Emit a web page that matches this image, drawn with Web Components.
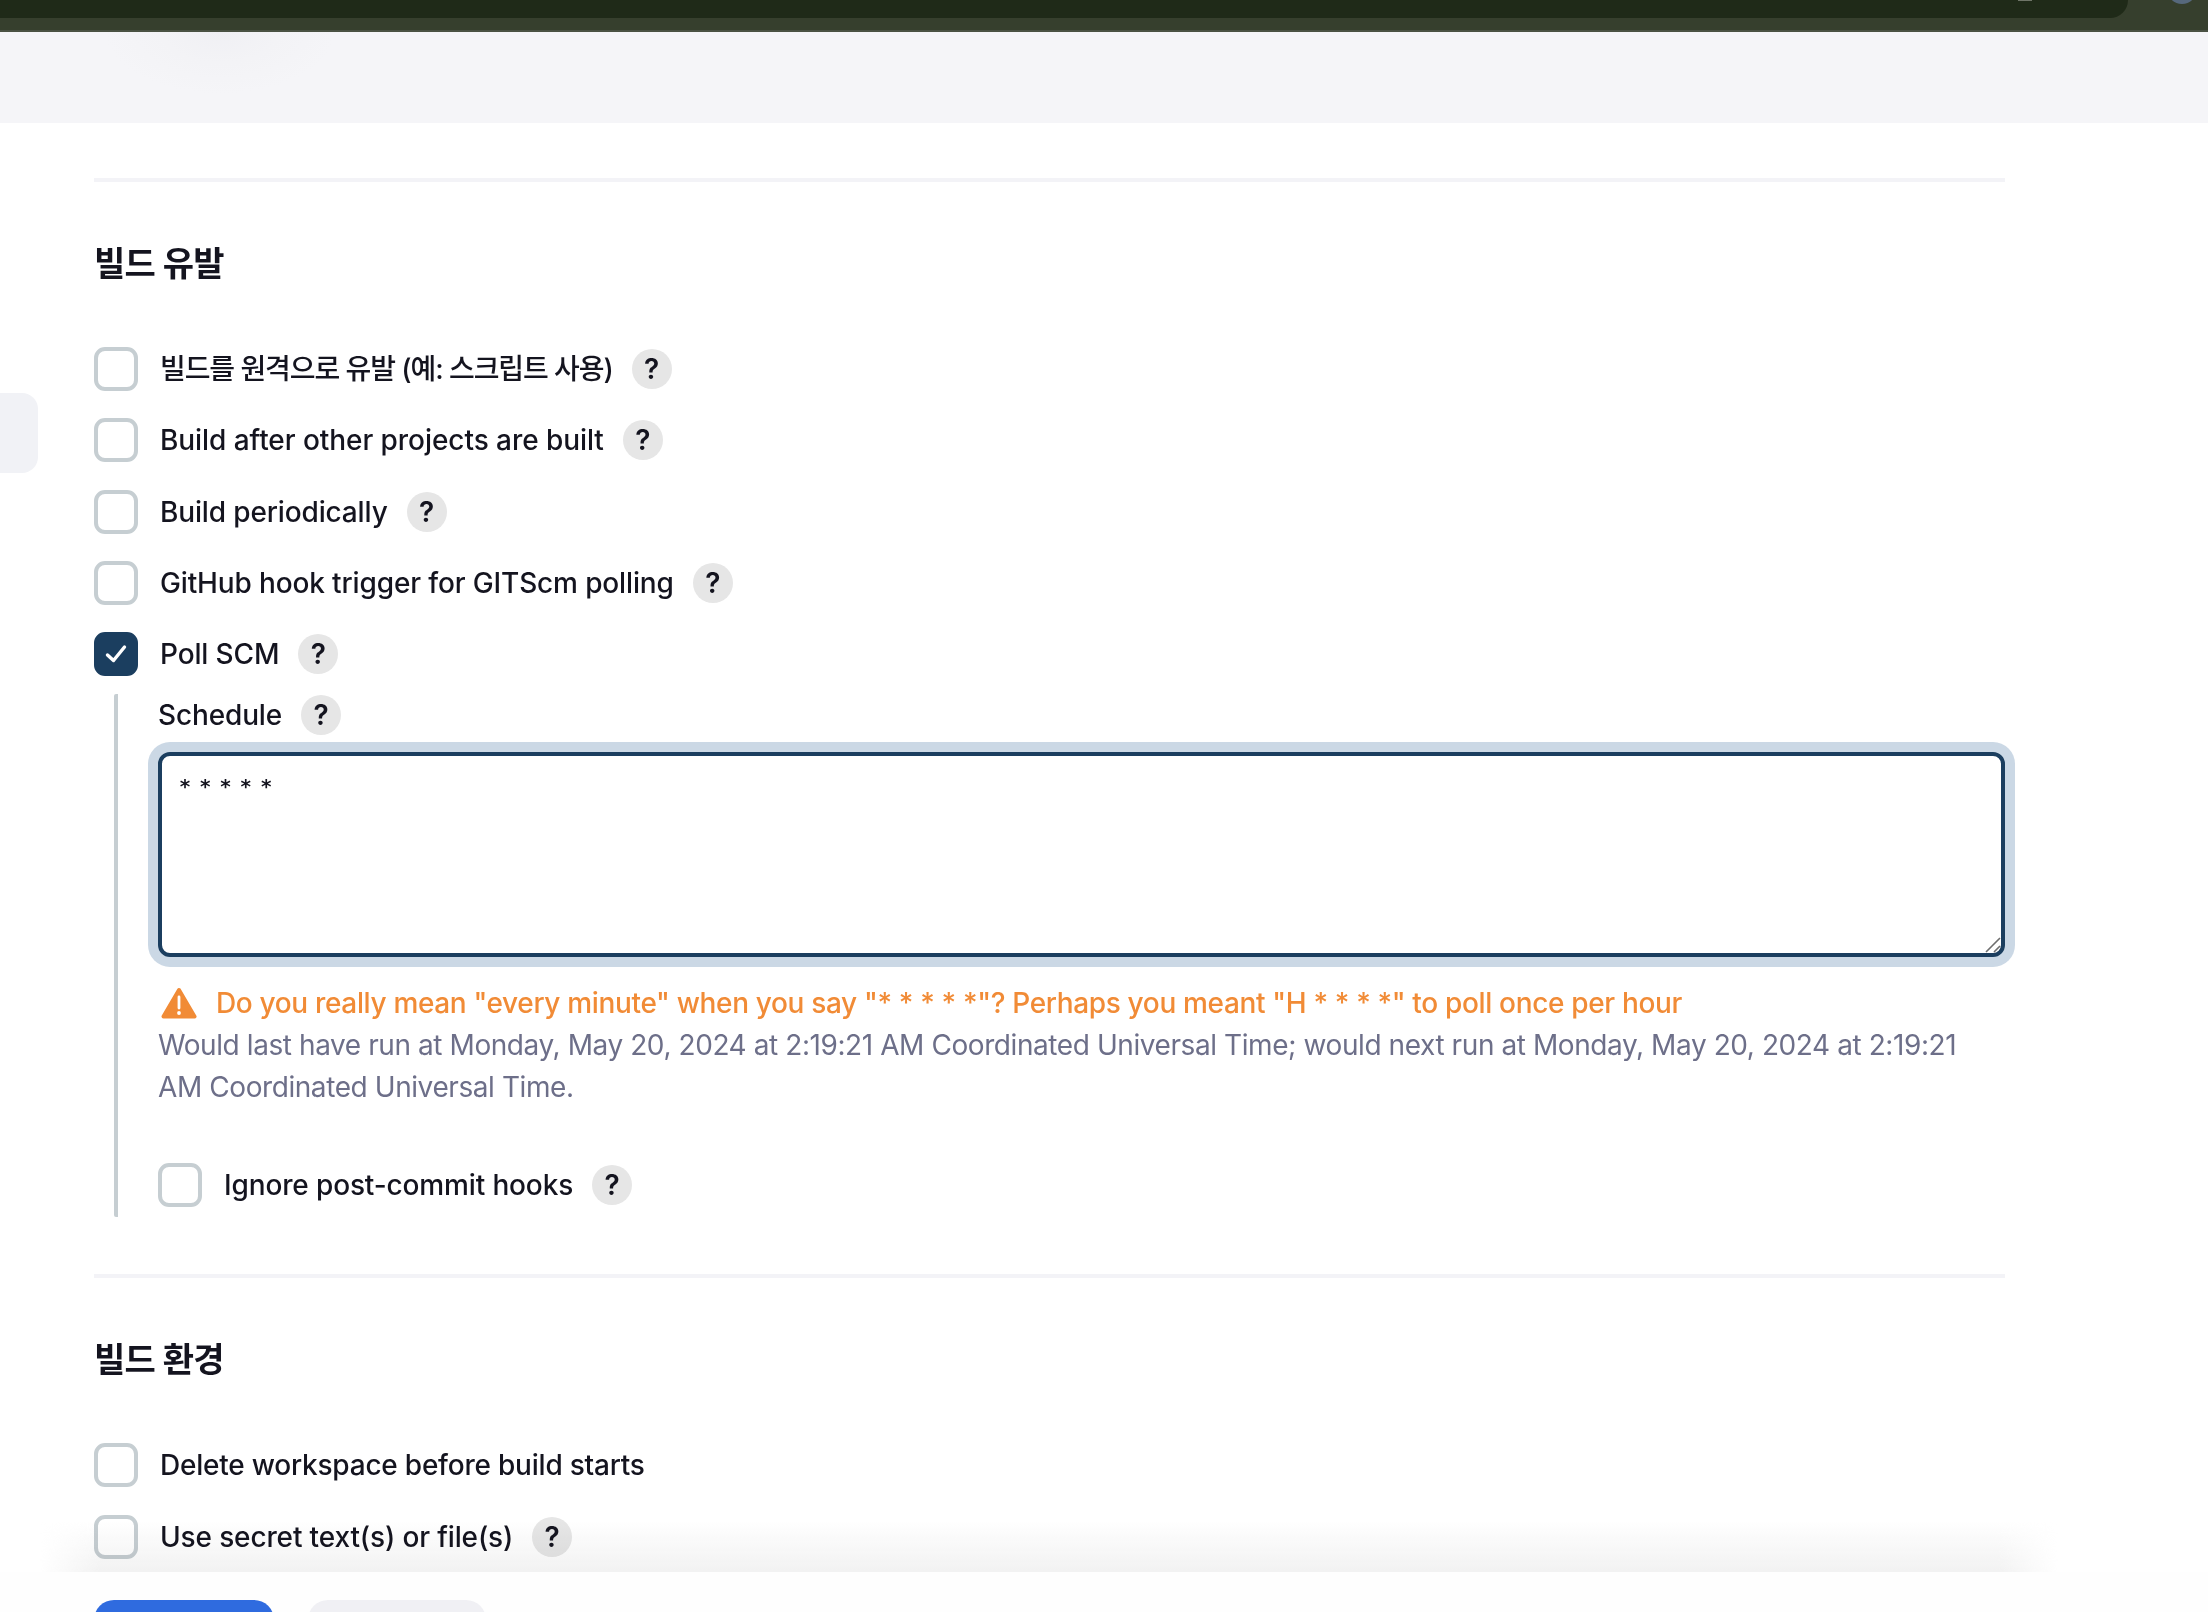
<!DOCTYPE html>
<html lang="ko">
<head>
<meta charset="utf-8">
<title>Jenkins configure</title>
<style>
  html, body { margin: 0; height: 100%; }
  body {
    width: 2208px;
    height: 1612px;
    overflow: hidden;
    background: #fff;
    color: #14141f;
    font-family: Inter, "Noto Sans CJK KR", sans-serif;
    font-size: 28px;
    line-height: 42px;
    display: flex;
    flex-direction: column;
    position: relative;
  }
  jk-page { flex: 1; min-height: 0; }
</style>
</head>
<body>
  <jk-topbar></jk-topbar>
  <jk-band></jk-band>
  <jk-sidetab></jk-sidetab>
  <jk-page>
    <jk-section title="빌드 유발">
      <jk-check help style="letter-spacing:-1.08px">빌드를 원격으로 유발 (예: 스크립트 사용)</jk-check>
      <jk-check help style="letter-spacing:-0.06px">Build after other projects are built</jk-check>
      <jk-check help>Build periodically</jk-check>
      <jk-check help>GitHub hook trigger for GITScm polling</jk-check>
      <jk-check help checked>Poll SCM</jk-check>
      <jk-nested>
        <jk-field-label>Schedule</jk-field-label>
        <jk-textarea>* * * * *</jk-textarea>
        <jk-warning>Do you really mean "every minute" when you say "* * * * *"? Perhaps you meant "H * * * *" to poll once per hour</jk-warning>
        <jk-note>Would last have run at Monday, May 20, 2024 at 2:19:21 AM Coordinated Universal Time; would next run at Monday, May 20, 2024 at 2:19:21 AM Coordinated Universal Time.</jk-note>
        <jk-check help class="ignore">Ignore post-commit hooks</jk-check>
      </jk-nested>
    </jk-section>
    <jk-section title="빌드 환경" class="env">
      <jk-check style="letter-spacing:-0.22px">Delete workspace before build starts</jk-check>
      <jk-check help>Use secret text(s) or file(s)</jk-check>
    </jk-section>
  </jk-page>
  <jk-bottombar></jk-bottombar>

<script>
function shadow(el, html) {
  el.attachShadow({ mode: 'open' });
  el.shadowRoot.innerHTML = html;
}

class JkTopbar extends HTMLElement {
  constructor() {
    super();
    shadow(this, `
      <style>
        :host { display: block; height: 32px; flex: none; background: #363f2d; border-bottom: 2px solid #4a5243; box-sizing: border-box; position: relative; overflow: hidden; }
        .inner { width: 2128px; height: 18px; background: #1f2a18; border-bottom-right-radius: 30px; }
        .avatar { position: absolute; left: 2167px; top: -26px; width: 30px; height: 30px; border-radius: 50%; background: #56687c; }
        .mark { position: absolute; left: 2018px; top: 0; width: 14px; height: 1px; background: #6f7568; }
      </style>
      <div class="inner"></div>
      <div class="mark"></div>
      <div class="avatar"></div>
    `);
  }
}

class JkBand extends HTMLElement {
  constructor() {
    super();
    shadow(this, `
      <style>
        :host {
          display: block; height: 91px; flex: none;
          background:
            radial-gradient(ellipse 115px 62px at 220px 0, #f0f0f4 0, #f3f3f6 50%, rgba(245,245,248,0) 100%),
            #f5f5f8;
        }
      </style>
    `);
  }
}

class JkSidetab extends HTMLElement {
  constructor() {
    super();
    shadow(this, `
      <style>
        :host { position: absolute; left: 0; top: 393px; width: 38px; height: 80px; background: #f1f2f6; border-radius: 0 16px 16px 0; }
      </style>
    `);
  }
}

class JkPage extends HTMLElement {
  constructor() {
    super();
    shadow(this, `
      <style>
        :host { display: block; padding: 55px 203px 0 94px; overflow: hidden; }
      </style>
      <slot></slot>
    `);
  }
}

class JkSection extends HTMLElement {
  constructor() {
    super();
    shadow(this, `
      <style>
        :host { display: block; }
        :host(.env) { margin-top: 57px; }
        hr { margin: 0; border: 0; height: 4px; background: #f3f3f7; }
        h2 { margin: 0; padding: 60px 0 0; height: 165px; box-sizing: border-box; font-size: 34px; font-weight: 600; line-height: 44px; letter-spacing: -0.8px; color: #14141f; }
        .rows { display: flex; flex-direction: column; }
      </style>
      <hr>
      <h2></h2>
      <div class="rows"><slot></slot></div>
    `);
    this.shadowRoot.querySelector('h2').textContent = this.getAttribute('title');
  }
}

class JkHelp extends HTMLElement {
  constructor() {
    super();
    shadow(this, `
      <style>
        :host { display: inline-flex; flex: none; width: 40px; height: 40px; border-radius: 50%; background: #e6e6e6; color: #14141f; align-items: center; justify-content: center; font-size: 28px; font-weight: 600; line-height: 40px; letter-spacing: 0; }
      </style>
      ?
    `);
  }
}

class JkCheck extends HTMLElement {
  constructor() {
    super();
    const checked = this.hasAttribute('checked');
    const help = this.hasAttribute('help');
    shadow(this, `
      <style>
        :host { display: flex; align-items: center; height: 44px; margin-bottom: 27.25px; font-weight: 500; letter-spacing: -0.14px; }
        :host(.ignore) { margin: 55px 0 0; }
        .box { flex: none; width: 44px; height: 44px; box-sizing: border-box; border: 4px solid #c6ced2; border-radius: 11px; background: #fff; margin-right: 22px; display: flex; align-items: center; justify-content: center; }
        .box.on { background: #1b3e5f; border-color: #1b3e5f; }
        .text { white-space: nowrap; }
        jk-help { margin-left: 19px; }
      </style>
      <span class="box ${checked ? 'on' : ''}">${checked ? '<svg width="24" height="24" viewBox="0 0 24 24" fill="none" stroke="#fff" stroke-width="3.4" stroke-linecap="round" stroke-linejoin="round"><path d="M3.5 13l6 5.5L20.5 5"/></svg>' : ''}</span>
      <span class="text"><slot></slot></span>
      ${help ? '<jk-help></jk-help>' : ''}
    `);
  }
}

class JkNested extends HTMLElement {
  constructor() {
    super();
    shadow(this, `
      <style>
        :host { display: block; margin: -9px 0 0 20px; padding: 0 0 0 40px; border-left: 4px solid #c6ced2; border-radius: 2px; height: 523px; box-sizing: border-box; }
      </style>
      <slot></slot>
    `);
  }
}

class JkFieldLabel extends HTMLElement {
  constructor() {
    super();
    shadow(this, `
      <style>
        :host { display: flex; align-items: center; height: 40px; margin-top: 1px; font-weight: 500; letter-spacing: -0.14px; }
        jk-help { margin-left: 19px; }
      </style>
      <span><slot></slot></span>
      <jk-help></jk-help>
    `);
  }
}

class JkTextarea extends HTMLElement {
  constructor() {
    super();
    shadow(this, `
      <style>
        :host { display: block; position: relative; margin: 17px 0 0 0; height: 205px; box-sizing: border-box; border: 4px solid #1b3e5f; border-radius: 12px; box-shadow: 0 0 0 10px #cbd8e5; background: #fff; padding: 15px 17px; width: 1847px; }
        .val { font-family: "DejaVu Sans Mono", monospace; font-size: 20px; letter-spacing: -1.9px; line-height: 30px; font-weight: 700; color: #14141f; white-space: pre; }
        svg { position: absolute; right: 0; bottom: 0; }
      </style>
      <div class="val"><slot></slot></div>
      <svg width="18" height="18" viewBox="0 0 18 18" fill="none" stroke="#6e6e6e" stroke-width="1.6"><path d="M3 17L17 3M11 17l6-6"/></svg>
    `);
  }
}

class JkWarning extends HTMLElement {
  constructor() {
    super();
    shadow(this, `
      <style>
        :host { display: flex; align-items: center; height: 42px; margin-top: 25px; color: #f18b36; font-weight: 500; white-space: nowrap; letter-spacing: -0.34px; }
        svg { flex: none; margin: 0 19px 0 3px; }
      </style>
      <svg width="36" height="32" viewBox="0 0 36 32"><path d="M18 3L33.5 29.5H2.5Z" fill="#f18b36" stroke="#f18b36" stroke-width="4" stroke-linejoin="round"/><path d="M18 10v11" stroke="#fff" stroke-width="2.8" stroke-linecap="round"/><circle cx="18" cy="26" r="1.9" fill="#fff"/></svg>
      <span><slot></slot></span>
    `);
  }
}

class JkNote extends HTMLElement {
  constructor() {
    super();
    shadow(this, `
      <style>
        :host { display: block; color: #6d6f89; width: 1820px; letter-spacing: -0.42px; }
      </style>
      <slot></slot>
    `);
  }
}

class JkBottombar extends HTMLElement {
  constructor() {
    super();
    shadow(this, `
      <style>
        :host { display: flex; flex: none; gap: 34px; height: 40px; box-sizing: border-box; padding: 28px 0 0 94px; background: #fefefe; position: relative; overflow: visible; }
        .shade { position: absolute; left: 40px; right: 150px; top: -52px; height: 52px; background: linear-gradient(to bottom, rgba(242,242,242,0), #f2f2f2); -webkit-mask-image: linear-gradient(to right, transparent 0, #000 60px, #000 calc(100% - 60px), transparent 100%); mask-image: linear-gradient(to right, transparent 0, #000 60px, #000 calc(100% - 60px), transparent 100%); mix-blend-mode: multiply; pointer-events: none; }
        .btn { width: 178px; height: 60px; border-radius: 20px; flex: none; }
        .save { background: #2f6bdf; width: 180px; }
        .apply { background: #f0f0f4; }
      </style>
      <div class="shade"></div>
      <div class="btn save"></div>
      <div class="btn apply"></div>
    `);
  }
}

customElements.define('jk-help', JkHelp);
customElements.define('jk-topbar', JkTopbar);
customElements.define('jk-band', JkBand);
customElements.define('jk-sidetab', JkSidetab);
customElements.define('jk-page', JkPage);
customElements.define('jk-section', JkSection);
customElements.define('jk-check', JkCheck);
customElements.define('jk-nested', JkNested);
customElements.define('jk-field-label', JkFieldLabel);
customElements.define('jk-textarea', JkTextarea);
customElements.define('jk-warning', JkWarning);
customElements.define('jk-note', JkNote);
customElements.define('jk-bottombar', JkBottombar);
</script>
</body>
</html>
